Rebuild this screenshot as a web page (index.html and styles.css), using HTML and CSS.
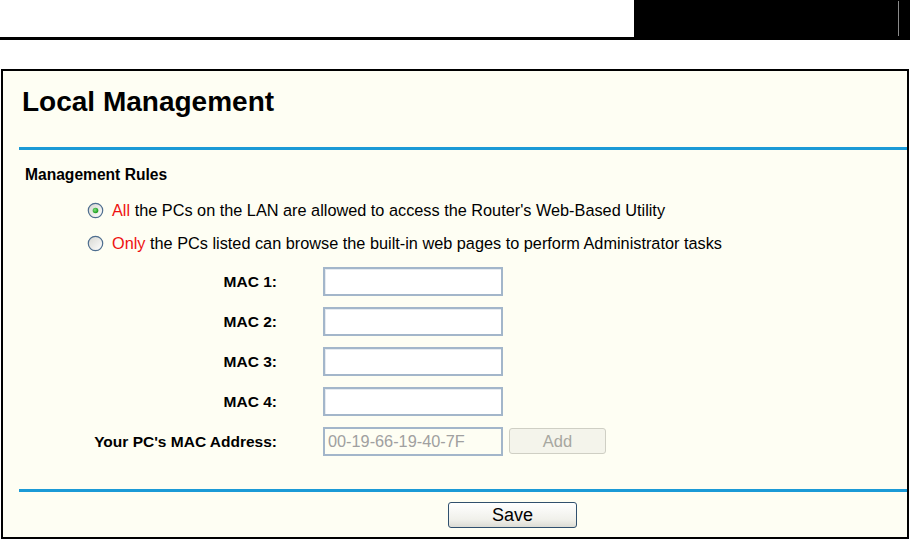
FILE: index.html
```html
<!DOCTYPE html>
<html>
<head>
<meta charset="utf-8">
<link rel="stylesheet" href="styles.css">
</head>
<body>
<div class="header">
  <div class="header-blank"></div>
  <div class="header-black"><span class="header-tick"></span></div>
</div>
<div class="header-rule"></div>

<div class="panel">
  <div class="title-area">
    <h1 class="title">Local Management</h1>
  </div>
  <div class="blue-rule"></div>

  <div class="section-label">Management Rules</div>

  <div class="radio-row">
    <svg class="radio" width="17" height="17" viewBox="0 0 17 17">
      <defs>
        <linearGradient id="rg1" x1="0" y1="0" x2="1" y2="1">
          <stop offset="0" stop-color="#d6d6d0"/>
          <stop offset="1" stop-color="#ffffff"/>
        </linearGradient>
        <radialGradient id="dot1" cx="0.4" cy="0.4" r="0.6">
          <stop offset="0" stop-color="#7ee07e"/>
          <stop offset="1" stop-color="#1a9a1a"/>
        </radialGradient>
      </defs>
      <circle cx="8.5" cy="8.5" r="7.2" fill="url(#rg1)" stroke="#4d6d8e" stroke-width="1.2"/>
      <circle cx="8.5" cy="8.5" r="2.8" fill="url(#dot1)"/>
    </svg>
    <span class="radio-text"><span class="red">All</span> the PCs on the LAN are allowed to access the Router's Web-Based Utility</span>
  </div>
  <div class="radio-row">
    <svg class="radio" width="17" height="17" viewBox="0 0 17 17">
      <defs>
        <linearGradient id="rg2" x1="0" y1="0" x2="1" y2="1">
          <stop offset="0" stop-color="#d6d6d0"/>
          <stop offset="1" stop-color="#ffffff"/>
        </linearGradient>
      </defs>
      <circle cx="8.5" cy="8.5" r="7.2" fill="url(#rg2)" stroke="#4d6d8e" stroke-width="1.2"/>
    </svg>
    <span class="radio-text"><span class="red">Only</span> the PCs listed can browse the built-in web pages to perform Administrator tasks</span>
  </div>

  <div class="mac-form">
    <label class="mac-label">MAC 1:</label>
    <div class="mac-input"></div>
    <div></div>
    <label class="mac-label">MAC 2:</label>
    <div class="mac-input"></div>
    <div></div>
    <label class="mac-label">MAC 3:</label>
    <div class="mac-input"></div>
    <div></div>
    <label class="mac-label">MAC 4:</label>
    <div class="mac-input"></div>
    <div></div>
    <label class="mac-label">Your PC's MAC Address:</label>
    <div class="mac-input readonly">00-19-66-19-40-7F</div>
    <div class="add-btn">Add</div>
  </div>

  <div class="blue-rule bottom"></div>
  <div class="save-row">
    <div class="save-btn">Save</div>
  </div>
</div>
</body>
</html>
```

FILE: styles.css
```css
html, body {
  margin: 0;
  padding: 0;
  background: #ffffff;
}
body {
  font-family: "Liberation Sans", Arial, sans-serif;
  color: #000;
  width: 910px;
  height: 539px;
  overflow: hidden;
}
.header {
  display: flex;
  height: 37px;
}
.header-blank {
  width: 634px;
}
.header-black {
  flex: 1;
  background: #000;
  position: relative;
}
.header-tick {
  position: absolute;
  left: 264px;
  top: 1px;
  width: 1px;
  height: 35px;
  background: #8a8a8a;
}
.header-rule {
  height: 3px;
  background: #000;
}
.panel {
  margin: 29px 0 0 1px;
  width: 904px;
  height: 466px;
  border: 2px solid #000;
  background: #fefef3;
}
.title-area {
  height: 76px;
  padding-left: 19px;
  box-sizing: border-box;
  padding-top: 17px;
}
.title {
  margin: 0;
  font-size: 28px;
  line-height: 28px;
  font-weight: bold;
}
.blue-rule {
  margin-left: 16px;
  height: 3px;
  background: #1b9ad6;
}
.section-label {
  margin-top: 17px;
  padding-left: 22px;
  font-size: 15.6px;
  line-height: 15px;
  font-weight: bold;
}
.radio-row {
  display: flex;
  align-items: center;
  padding-left: 84px;
  height: 33px;
  font-size: 16.3px;
}
.section-label + .radio-row {
  margin-top: 12px;
}
.radio {
  flex: none;
  margin-right: 8px;
}
.red {
  color: #ee1111;
}
.mac-form {
  display: grid;
  grid-template-columns: 274px 180px 103px;
  column-gap: 46px;
  row-gap: 11px;
  margin-top: 7px;
}
.mac-form > :nth-child(3n) {
  margin-left: -40px;
}
.mac-label {
  justify-self: end;
  align-self: center;
  font-size: 15.5px;
  font-weight: bold;
}
.mac-input {
  height: 29px;
  box-sizing: border-box;
  border: 2px solid #a3b6ca;
  box-shadow: inset 1px 1px 0 #e6ebf0;
  background: #fff;
  font-size: 16.3px;
  line-height: 25px;
  padding-left: 3px;
}
.mac-input.readonly {
  color: #a0a0a0;
  background: #fefef3;
  box-shadow: none;
}
.add-btn {
  width: 97px;
  height: 26px;
  margin-top: 1px;
  box-sizing: border-box;
  border: 1px solid #cfcfc4;
  border-radius: 3px;
  background: #f4f4eb;
  color: #a7a7a0;
  font-size: 16.5px;
  line-height: 24px;
  text-align: center;
}
.blue-rule.bottom {
  margin-top: 33px;
}
.save-row {
  padding-left: 445px;
  margin-top: 10px;
}
.save-btn {
  width: 129px;
  height: 26px;
  box-sizing: border-box;
  border: 1px solid #30506e;
  border-radius: 3px;
  background: linear-gradient(#ffffff, #f0f0ea 70%, #dcdcd4);
  font-size: 18px;
  line-height: 24px;
  text-align: center;
}
```
